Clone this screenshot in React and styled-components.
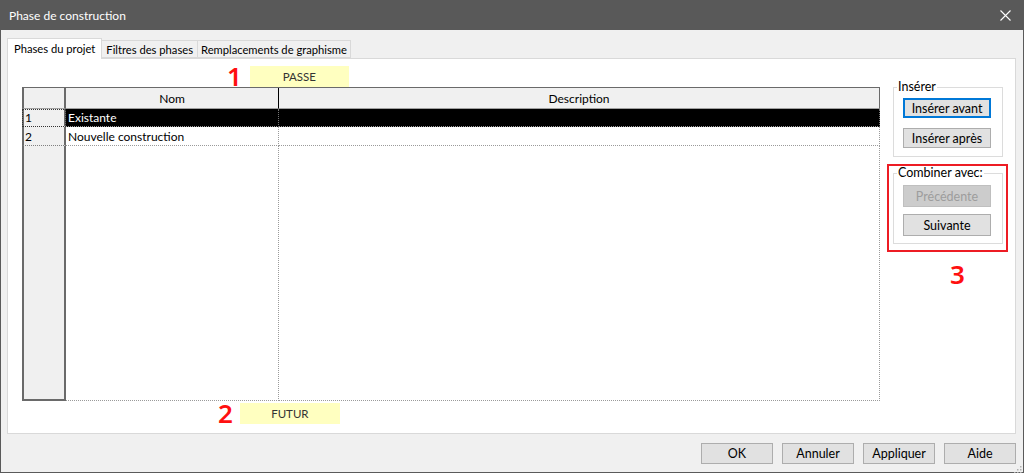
import React from "react";
import styled, { createGlobalStyle } from "styled-components";

const GlobalStyle = createGlobalStyle`
  html, body { margin: 0; padding: 0; background: #f0f0f0; }
  body { font-family: "Segoe UI", Lato, "Noto Sans", sans-serif; font-size: 12px; color: #000; }
  * { box-sizing: border-box; }
`;

const Window = styled.div`
  width: 1024px;
  height: 473px;
  display: flex;
  flex-direction: column;
  background: #f0f0f0;
  border: 1px solid #5a5a5a;
  border-top: none;
  position: relative;
`;

const TitleBar = styled.div`
  height: 30px;
  background: #595959;
  color: #fff;
  display: flex;
  align-items: center;
  justify-content: space-between;
  padding: 0 9px 0 9px;
  font-size: 12px;
  margin: 0 -1px;
`;

const CloseBtn = styled.div`
  width: 14px;
  height: 14px;
  display: flex;
  align-items: center;
  justify-content: center;
  margin-right: 3px;
`;

const Body = styled.div`
  flex: 1;
  display: flex;
  flex-direction: column;
  padding: 8px 7px 0 6px;
`;

const TabStrip = styled.div`
  display: flex;
  align-items: flex-end;
  height: 20px;
  position: relative;
  z-index: 1;
`;

const Tab = styled.div`
  height: ${(p) => (p.$active ? "21px" : "18px")};
  padding: 0 ${(p) => p.$pad}px;
  display: flex;
  align-items: center;
  font-size: 11.2px;
  background: ${(p) => (p.$active ? "#fff" : "#f0f0f0")};
  border: 1px solid #d9d9d9;
  border-bottom: ${(p) => (p.$active ? "none" : "1px solid #d9d9d9")};
  border-left: ${(p) => (p.$active ? "1px solid #d9d9d9" : "none")};
  margin-bottom: ${(p) => (p.$active ? "-1px" : "0")};
  white-space: nowrap;
  padding-bottom: ${(p) => (p.$active ? "2px" : "0")};
`;

const Panel = styled.div`
  height: 376px;
  background: #fff;
  border: 1px solid #d9d9d9;
  display: flex;
  padding: 0 11px 0 14px;
`;

const MainArea = styled.div`
  display: flex;
  flex-direction: column;
  width: 858px;
`;

const AnnotationRow = styled.div`
  display: flex;
  align-items: center;
  height: 21px;
  margin: ${(p) => p.$margin};
  padding-left: ${(p) => p.$indent}px;
  gap: ${(p) => p.$gap}px;
`;

const RedNumber = styled.span`
  color: #ff1010;
  font-family: "Segoe UI", "Noto Sans", sans-serif;
  font-weight: 600;
  font-size: 26px;
  line-height: 21px;
`;

const YellowLabel = styled.div`
  width: ${(p) => p.$w}px;
  height: 21px;
  background: #ffffc0;
  color: #333;
  font-size: 11.5px;
  display: flex;
  align-items: center;
  justify-content: center;
`;

const Table = styled.div`
  display: grid;
  grid-template-columns: 44px 213px 1fr;
  grid-template-rows: 21px 18px 19px 1fr;
  height: 314px;
  border-top: 1px solid #6a6a6a;
`;

const HeadCell = styled.div`
  background: #f0f0f0;
  border-bottom: 1px solid #a0a0a0;
  border-left: ${(p) => (p.$gutter ? "2px solid #6a6a6a" : "none")};
  border-right: ${(p) =>
    p.$gutter ? "2px solid #6a6a6a" : p.$last ? "1px solid #6a6a6a" : "1px solid #000"};
  display: flex;
  align-items: center;
  justify-content: center;
  font-size: 12px;
`;

const GutterCell = styled.div`
  background: #f0f0f0;
  border-left: 2px solid #6a6a6a;
  border-right: 2px solid #6a6a6a;
  border-bottom: ${(p) => (p.$filler ? "2px solid #6a6a6a" : "1px dotted #808080")};
  outline: ${(p) => (p.$focus ? "1px dotted #333" : "none")};
  outline-offset: -1px;
  padding-left: 1px;
  display: flex;
  align-items: center;
  font-size: 12px;
`;

const DataCell = styled.div`
  background: ${(p) => (p.$selected ? "#000" : "#fff")};
  color: ${(p) => (p.$selected ? "#fff" : "#000")};
  border-bottom: 1px dotted #9a9a9a;
  border-right: 1px dotted ${(p) => (p.$selected ? "#777" : "#9a9a9a")};
  padding-left: 2px;
  display: flex;
  align-items: center;
  font-size: 12px;
  white-space: nowrap;
`;

const SideColumn = styled.div`
  width: 110px;
  margin-left: 13px;
  padding-top: 21px;
  display: flex;
  flex-direction: column;
`;

const Group = styled.fieldset`
  margin: 0;
  border: 1px solid #dcdcdc;
  padding: ${(p) => p.$pt}px 0 ${(p) => p.$pb}px 9px;
  display: flex;
  flex-direction: column;
  gap: ${(p) => p.$gap}px;
  min-width: 0;
`;

const Legend = styled.legend`
  padding: 0 1px;
  margin-left: -6px;
  font-size: 12.5px;
  line-height: 14px;
`;

const Button = styled.button`
  font-family: inherit;
  font-size: 12.5px;
  width: ${(p) => p.$w || 88}px;
  height: ${(p) => p.$h || 20}px;
  padding: 0;
  background: ${(p) => (p.disabled ? "#cccccc" : "#e1e1e1")};
  color: ${(p) => (p.disabled ? "#9d9d9d" : "#000")};
  border: 1px solid ${(p) => (p.$focus ? "#0078d7" : p.disabled ? "#bfbfbf" : "#adadad")};
  box-shadow: ${(p) => (p.$focus ? "inset 0 0 0 1px #0078d7" : "none")};
  cursor: default;
`;

const RedBox = styled.div`
  margin: 7px -5px 0 -6px;
  border: 2px solid #ed1c24;
  padding: 0 3px 6px 4px;
`;

const SideNumber = styled.div`
  display: flex;
  justify-content: center;
  padding-left: 19px;
  margin-top: 12px;
`;

const Footer = styled.div`
  display: flex;
  justify-content: flex-end;
  gap: 9px;
  padding: 9px 0 0 0;
`;

const Grip = styled.div`
  position: absolute;
  right: 1px;
  bottom: 1px;
  width: 9px;
  height: 9px;
`;

export default function App() {
  return (
    <>
      <GlobalStyle />
      <Window>
        <TitleBar>
          <span>Phase de construction</span>
          <CloseBtn>
            <svg width="11" height="11" viewBox="0 0 11 11">
              <path d="M0.5 0.5 L10.5 10.5 M10.5 0.5 L0.5 10.5" stroke="#fff" strokeWidth="1.1" />
            </svg>
          </CloseBtn>
        </TitleBar>
        <Body>
          <TabStrip>
            <Tab $active $pad={6}>Phases du projet</Tab>
            <Tab $pad={4}>Filtres des phases</Tab>
            <Tab $pad={3}>Remplacements de graphisme</Tab>
          </TabStrip>
          <Panel>
            <MainArea>
              <AnnotationRow $margin="7px 0 0 0" $indent={205} $gap={8}>
                <RedNumber>1</RedNumber>
                <YellowLabel $w={99}>PASSE</YellowLabel>
              </AnnotationRow>
              <Table>
                <HeadCell $gutter />
                <HeadCell>Nom</HeadCell>
                <HeadCell $last>Description</HeadCell>

                <GutterCell $focus>1</GutterCell>
                <DataCell $selected>Existante</DataCell>
                <DataCell $selected />

                <GutterCell>2</GutterCell>
                <DataCell>Nouvelle construction</DataCell>
                <DataCell />

                <GutterCell $filler />
                <DataCell />
                <DataCell />
              </Table>
              <AnnotationRow $margin="2px 0 0 0" $indent={196} $gap={7}>
                <RedNumber>2</RedNumber>
                <YellowLabel $w={100}>FUTUR</YellowLabel>
              </AnnotationRow>
            </MainArea>
            <SideColumn>
              <Group $pt={4} $pb={8} $gap={10}>
                <Legend>Insérer</Legend>
                <Button $focus>Insérer avant</Button>
                <Button>Insérer après</Button>
              </Group>
              <RedBox>
                <Group $pt={5} $pb={7} $gap={7}>
                  <Legend>Combiner avec:</Legend>
                  <Button $h={22} disabled>Précédente</Button>
                  <Button $h={22}>Suivante</Button>
                </Group>
              </RedBox>
              <SideNumber>
                <RedNumber>3</RedNumber>
              </SideNumber>
            </SideColumn>
          </Panel>
          <Footer>
            <Button $w={72} $h={21}>OK</Button>
            <Button $w={72} $h={21}>Annuler</Button>
            <Button $w={72} $h={21}>Appliquer</Button>
            <Button $w={72} $h={21}>Aide</Button>
          </Footer>
        </Body>
        <Grip>
          <svg width="9" height="9" viewBox="0 0 9 9">
            {[[7, 1], [4, 4], [7, 4], [1, 7], [4, 7], [7, 7]].map(([x, y]) => (
              <rect key={`${x}-${y}`} x={x} y={y} width="1.5" height="1.5" fill="#b0b0b0" />
            ))}
          </svg>
        </Grip>
      </Window>
    </>
  );
}
